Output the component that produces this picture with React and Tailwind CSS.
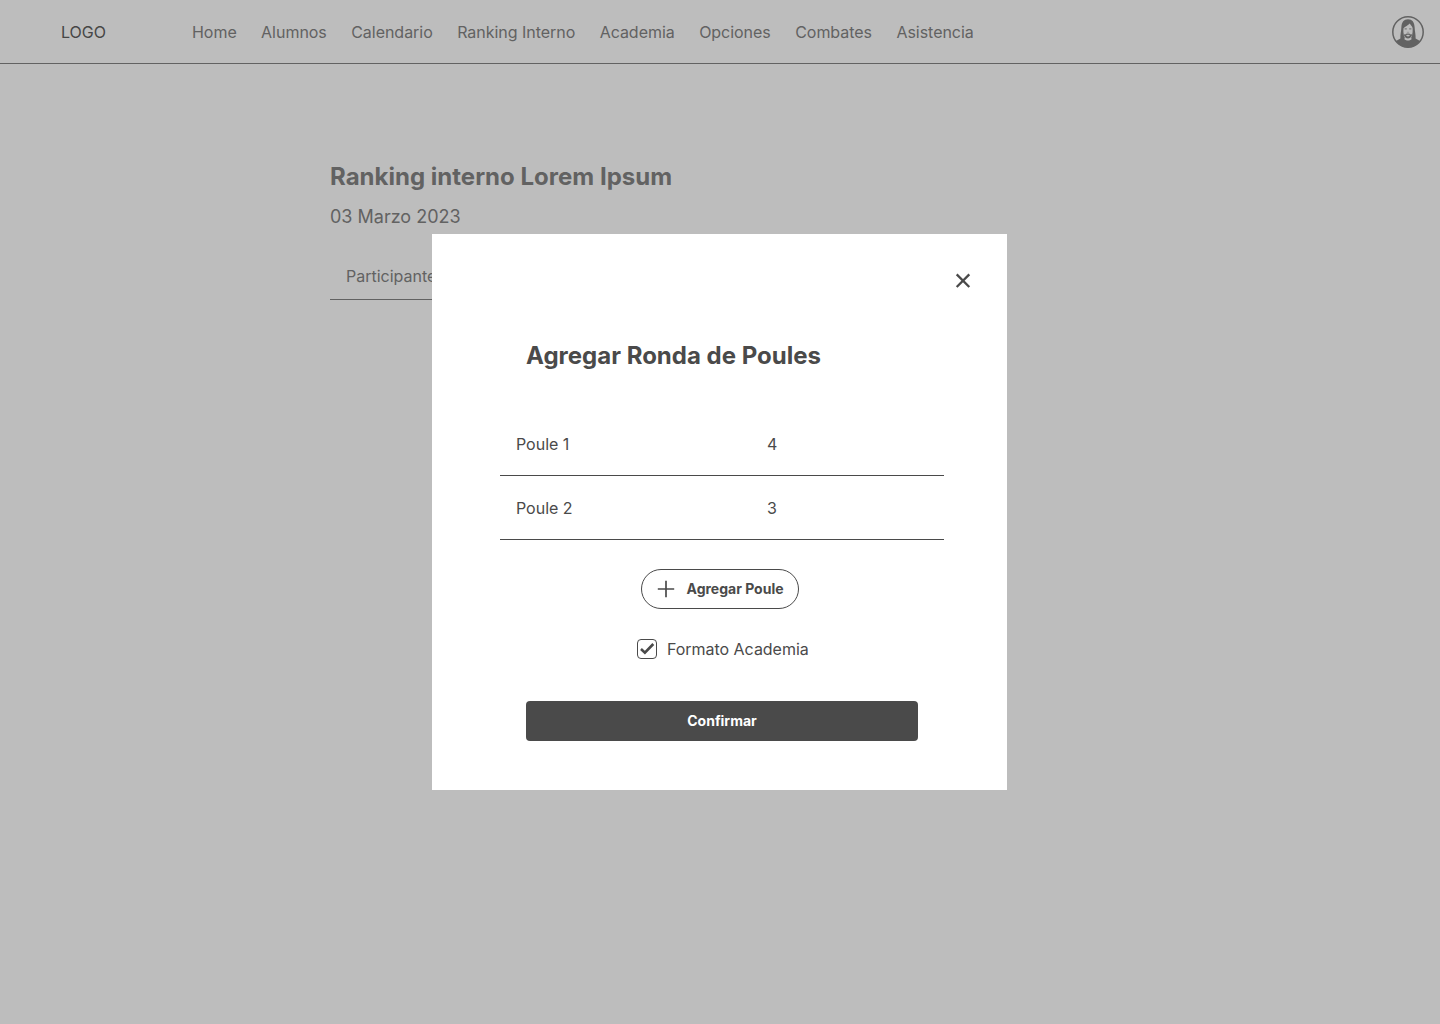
const NAV = ["Home", "Alumnos", "Calendario", "Ranking Interno", "Academia", "Opciones", "Combates", "Asistencia"];
const POULES = [
  { name: "Poule 1", count: 4 },
  { name: "Poule 2", count: 3 },
];

function Avatar() {
  return (
    <svg className="size-8 text-[#626262]" viewBox="0 0 32 32" fill="none">
      <circle cx="16" cy="16" r="15.2" stroke="currentColor" strokeWidth="1.5" />
      <path
        d="M16 3.2C11.8 3.2 9.6 6.2 9.4 11C9.2 15.5 8.2 18.5 8.4 22.6L4 25C6.7 29 11 31.2 16 31.2S25.3 29 28 25L23.6 22.6C23.8 18.5 22.8 15.5 22.6 11C22.4 6.2 20.2 3.2 16 3.2Z"
        fill="currentColor"
      />
      <path
        d="M17.8 7.4C16 9.6 13.2 10 11.5 12.2C11.2 16.2 11.4 19.3 12.8 21.5L12.4 23.2C14.4 25 17.6 25 19.6 23.2L19.2 21.5C20.6 19.3 20.8 16.2 20.6 12C20.2 10 18.7 9.2 17.8 7.4Z"
        fill="#bdbdbd"
      />
      <path d="M12.6 12.9H14.8M17.2 12.9H19.4" stroke="currentColor" strokeWidth="0.9" />
      <path d="M14.9 16.3H17.1" stroke="currentColor" strokeWidth="0.4" />
      <path
        d="M11.4 16.5C11.8 19.6 13 22.3 16 22.5C19 22.3 20.2 19.6 20.6 16.5C20.1 18.2 19.4 18.9 18.7 18.4C17.8 17.5 16.9 17.4 16 17.7C15.1 17.4 14.2 17.5 13.3 18.4C12.6 18.9 11.9 18.2 11.4 16.5Z"
        fill="currentColor"
      />
      <path d="M14 19.1Q16 18.4 18 19.1Q17.5 20.4 16 20.4T14 19.1Z" fill="#bdbdbd" />
    </svg>
  );
}

function Modal() {
  return (
    <div className="absolute left-[432px] top-[234px] flex h-[556px] w-[575px] flex-col bg-white pl-[68px] pr-[63px] text-[#4a4a4a]">
      <button className="-mr-[27px] mt-[39px] flex h-4 w-4 items-center justify-center self-end" aria-label="Cerrar">
        <svg className="size-4" viewBox="0 0 16 16" fill="none" stroke="currentColor" strokeWidth="2.3">
          <path d="M1.7 1.4L14.3 14M14.3 1.4L1.7 14" />
        </svg>
      </button>
      <h2 className="ml-[26px] mt-[51px] text-2xl font-bold leading-8 tracking-[0.01px]">Agregar Ronda de Poules</h2>
      <div className="mt-10">
        {POULES.map((p) => (
          <div key={p.name} className="flex h-16 items-center border-b border-[#4a4a4a] pl-4 tracking-[-0.02px]">
            <span className="w-[251px]">{p.name}</span>
            <span>{p.count}</span>
          </div>
        ))}
      </div>
      <button className="ml-[141px] mt-[29px] flex h-10 w-[158px] shrink-0 items-center rounded-full border border-[#4a4a4a] pl-4 text-sm font-bold">
        <svg className="mr-[12.5px] size-4 overflow-visible" viewBox="0 0 16 16" fill="none" stroke="currentColor" strokeWidth="1.7">
          <path d="M8 -0.2V16.2M-0.2 8H16.2" />
        </svg>
        Agregar Poule
      </button>
      <label className="ml-[137px] mt-[28px] flex h-6 items-center gap-2.5 tracking-[-0.03px]">
        <span className="flex size-5 items-center justify-center rounded border border-[#4a4a4a]">
          <svg className="size-[18px]" viewBox="0 0 18 18" fill="none" stroke="currentColor" strokeWidth="2.6">
            <path d="M3 9L6.9 12.7L15.3 4" />
          </svg>
        </span>
        Formato Academia
      </label>
      <button className="ml-[26px] mt-10 h-10 w-[392px] shrink-0 rounded bg-[#4a4a4a] text-sm font-bold text-white">
        Confirmar
      </button>
    </div>
  );
}

export default function App() {
  return (
    <div className="relative h-[1024px] w-[1440px] overflow-hidden bg-[#bdbdbd] font-['Inter',sans-serif] text-base text-[#626262]">
      <header className="flex h-16 items-center border-b border-[#626262] pl-[61px] pr-4">
        <span className="w-[131px] text-[#464646]">LOGO</span>
        <nav className="flex flex-1 gap-[24.4px] tracking-[-0.03px]">
          {NAV.map((n) => (
            <a key={n} className="whitespace-nowrap">{n}</a>
          ))}
        </nav>
        <Avatar />
      </header>
      <main className="ml-[330px] mt-[97px] w-[444px]">
        <h1 className="text-2xl font-bold leading-8 tracking-[0.01px]">Ranking interno Lorem Ipsum</h1>
        <p className="mt-3 text-lg leading-6">03 Marzo 2023</p>
        <div className="mt-[22px] flex h-[49px] border-b border-[#626262] pl-4 pt-[13px]">Participantes</div>
      </main>
      <Modal />
    </div>
  );
}
